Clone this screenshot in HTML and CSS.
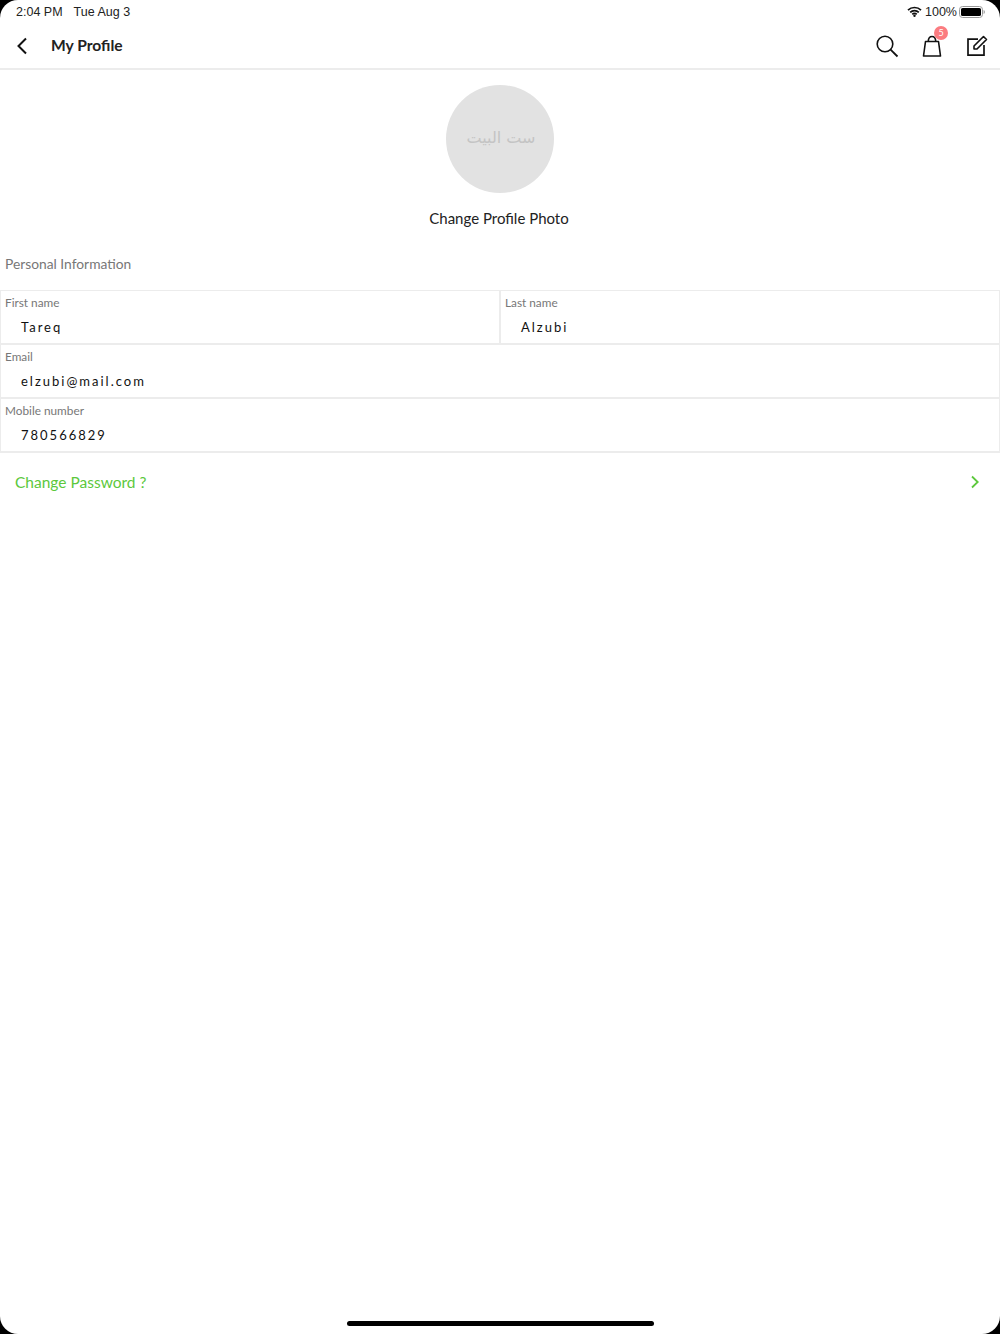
FILE: index.html
```html
<!DOCTYPE html>
<html lang="en">
<head>
<meta charset="utf-8">
<title>My Profile</title>
<link rel="stylesheet" href="styles.css">
</head>
<body>
<div class="screen">
  <div class="status">
    <div class="status-left"><span>2:04 PM</span><span>Tue Aug 3</span></div>
    <div class="status-right">
      <svg class="wifi" width="15" height="11" viewBox="0 0 15 11"><path d="M1 4.200a9.200 9.200 0 0 1 13 0M3.200 6.400a6.100 6.100 0 0 1 8.600 0M5.300 8.300a3.100 3.100 0 0 1 4.400 0" fill="none" stroke="#111" stroke-width="1.700"/><circle cx="7.500" cy="9.800" r="1.200" fill="#111"/></svg>
      <span>100%</span>
      <svg class="battery" width="26" height="12" viewBox="0 0 26 12"><rect x=".5" y=".5" width="23" height="11" rx="3" fill="none" stroke="#999"/><rect x="2" y="2" width="20" height="8" rx="1.600" fill="#000"/><path d="M24.600 4v4c.8-.3 1.200-1.100 1.200-2s-.4-1.700-1.200-2z" fill="#999"/></svg>
    </div>
  </div>
  <header class="nav">
    <div class="nav-left">
      <svg class="back" width="12" height="18" viewBox="0 0 12 18"><path d="M10 1.500 2.500 9l7.500 7.500" fill="none" stroke="#111" stroke-width="2"/></svg>
      <h1 class="title">My Profile</h1>
    </div>
    <div class="nav-right">
      <svg class="search" width="24" height="24" viewBox="0 0 24 24"><circle cx="10" cy="10" r="7.800" fill="none" stroke="#111" stroke-width="1.600"/><path d="m15.600 15.600 6.900 6.900" stroke="#111" stroke-width="1.800" fill="none"/></svg>
      <div class="cart">
        <svg width="20" height="22" viewBox="0 0 20 22"><path d="M3.500 6.500h13l2 14.500H1.500zM6.200 6.500C6.400 3 7.800 1.500 10 1.500s3.600 1.500 3.800 5" fill="none" stroke="#111" stroke-width="1.600" stroke-linejoin="round"/></svg>
        <span class="badge">5</span>
      </div>
      <svg width="22" height="22" viewBox="0 0 22 22"><path d="M12 4.200H2v16h16V10" fill="none" stroke="#111" stroke-width="1.700"/><path d="M8 11 17.500 1.500 20.500 4.500 11 14H8z" fill="none" stroke="#111" stroke-width="1.600" stroke-linejoin="round"/></svg>
    </div>
  </header>
  <section class="profile">
    <div class="avatar"><span dir="rtl" lang="ar">ست البيت</span></div>
    <div class="change-photo">Change Profile Photo</div>
  </section>
  <div class="section-label">Personal Information</div>
  <div class="fields">
    <div class="field"><div class="label">First name</div><div class="value">Tareq</div></div>
    <div class="field"><div class="label">Last name</div><div class="value">Alzubi</div></div>
    <div class="field wide"><div class="label">Email</div><div class="value">elzubi@mail.com</div></div>
    <div class="field wide"><div class="label">Mobile number</div><div class="value">780566829</div></div>
  </div>
  <div class="password">
    <span>Change Password ?</span>
    <svg width="10" height="14" viewBox="0 0 10 14"><path d="M2 1.500 7.700 7 2 12.500" fill="none" stroke="#5cc83c" stroke-width="1.800"/></svg>
  </div>
  <div class="spacer"></div>
  <div class="home"></div>
</div>
</body>
</html>
```
FILE: styles.css
```css
html, body {
  margin: 0;
  height: 100%;
  background: #000;
}
.screen {
  height: 1334px;
  background: #fff;
  border-radius: 18px;
  display: flex;
  flex-direction: column;
  overflow: hidden;
  font-family: "Lato", "Noto Sans", sans-serif;
  color: #222;
}
.status {
  height: 24px;
  box-sizing: border-box;
  padding: 0 15px 1px 16px;
  display: flex;
  justify-content: space-between;
  align-items: center;
  font-family: "Liberation Sans", sans-serif;
  font-size: 12.5px;
  color: #222;
}
.status-left { display: flex; gap: 11px; }
.status-right { display: flex; align-items: center; gap: 3px; }
.status-right .battery { margin-left: -1px; }
.nav {
  height: 46px;
  box-sizing: border-box;
  border-bottom: 2px solid #ececec;
  padding: 0 12px 1px 17px;
  display: flex;
  justify-content: space-between;
  align-items: center;
}
.nav-left { display: flex; align-items: center; gap: 22px; }
.back { margin-left: -1px; }
.title {
  margin: 0 0 2px 1px;
  font-size: 15.6px;
  font-weight: 700;
  color: #222;
}
.nav-right { display: flex; align-items: center; gap: 24px; }
.search { margin-right: -1px; }
.cart { position: relative; height: 22px; }
.badge {
  position: absolute;
  top: -9px;
  left: 12px;
  width: 14px;
  height: 14px;
  border-radius: 50%;
  background: #fb7c80;
  color: #fff;
  font-size: 9px;
  line-height: 14px;
  text-align: center;
}
.profile {
  padding-top: 15px;
  display: flex;
  flex-direction: column;
  align-items: center;
}
.avatar {
  width: 108px;
  height: 108px;
  box-sizing: border-box;
  padding: 0 0 4px 2px;
  border-radius: 50%;
  background: #e2e2e2;
  display: flex;
  align-items: center;
  justify-content: center;
  font-family: "DejaVu Sans", sans-serif;
  font-size: 16px;
  color: #c4c4c4;
}
.change-photo {
  margin-top: 15px;
  margin-right: 2px;
  font-size: 15px;
  line-height: 20px;
  color: #222;
}
.section-label {
  margin-top: 26px;
  padding-left: 5px;
  font-size: 13.8px;
  line-height: 20px;
  color: #777;
}
.fields {
  margin-top: 16px;
  display: grid;
  grid-template-columns: 1fr 1fr;
  border-top: 1px solid #ececec;
}
.field {
  height: 54px;
  box-sizing: border-box;
  border: 1px solid #ececec;
  border-top: 0;
  border-bottom-width: 2px;
  padding: 5px 0 0 4px;
}
.field.wide { grid-column: 1 / -1; }
.label {
  font-size: 11.8px;
  line-height: 14px;
  color: #777;
}
.value {
  margin-top: 9px;
  padding-left: 16px;
  font-size: 13px;
  line-height: 16px;
  letter-spacing: 2px;
  color: #111;
}
.password {
  margin-top: 19px;
  padding: 0 20px 0 15px;
  display: flex;
  justify-content: space-between;
  align-items: center;
  font-size: 15.5px;
  line-height: 20px;
  color: #5cc83c;
}
.spacer { flex: 1; }
.home {
  width: 307px;
  height: 5px;
  margin: 0 auto 8px;
  border-radius: 3px;
  background: #000;
}
```
